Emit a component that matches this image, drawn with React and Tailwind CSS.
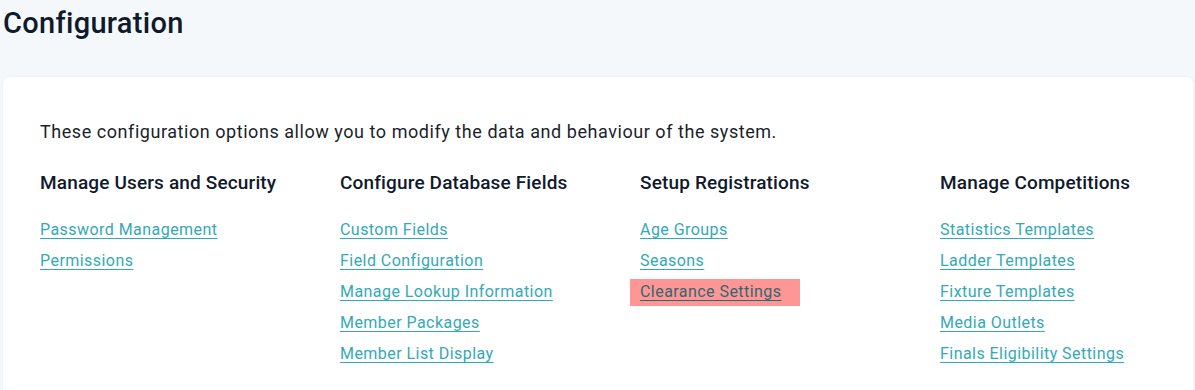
const columns = [
  { title: 'Manage Users and Security', links: ['Password Management', 'Permissions'] },
  { title: 'Configure Database Fields', links: ['Custom Fields', 'Field Configuration', 'Manage Lookup Information', 'Member Packages', 'Member List Display'] },
  { title: 'Setup Registrations', links: ['Age Groups', 'Seasons', 'Clearance Settings'] },
  { title: 'Manage Competitions', links: ['Statistics Templates', 'Ladder Templates', 'Fixture Templates', 'Media Outlets', 'Finals Eligibility Settings'] },
];

export default function App() {
  return (
    <div className="w-[1195px] h-[390px] overflow-hidden bg-[#f5f8fb] text-[#0f1a2c]" style={{ fontFamily: 'Roboto, "Liberation Sans", sans-serif' }}>
      <h1 className="pl-[3px] pt-[5px] h-[77px] text-[29px] font-medium tracking-[0.3px] leading-[36px]">Configuration</h1>
      <div className="ml-[3px] mr-[2px] bg-white rounded-t-md h-[320px] pl-[37px] pt-[42px] shadow-[0_0_3px_rgba(200,215,235,0.4)]">
        <p className="text-[18px] leading-[26px] tracking-[0.55px] text-[#1a1f2b]">These configuration options allow you to modify the data and behaviour of the system.</p>
        <div className="grid grid-cols-[300px_300px_300px_300px] mt-[25px]">
          {columns.map(col => (
            <div key={col.title}>
              <h2 className="text-[19px] font-medium leading-[26px] tracking-[0.15px] mb-[24px]">{col.title}</h2>
              <ul className="flex flex-col">
                {col.links.map(l => (
                  <li key={l} className="h-[31px] flex items-start">
                    {l === 'Clearance Settings' ? (
                      <a className="-ml-[10px] -mt-[3px] pl-[10px] w-[170px] h-[27px] pt-[2px] bg-[#ff9696] text-[#2f6870] underline underline-offset-[3px] text-[16px] leading-[21px] tracking-[0.45px] cursor-pointer">{l}</a>
                    ) : (
                      <a className="text-[#34a9b6] underline underline-offset-[3px] text-[16px] leading-[20px] tracking-[0.45px] cursor-pointer">{l}</a>
                    )}
                  </li>
                ))}
              </ul>
            </div>
          ))}
        </div>
      </div>
    </div>
  );
}
